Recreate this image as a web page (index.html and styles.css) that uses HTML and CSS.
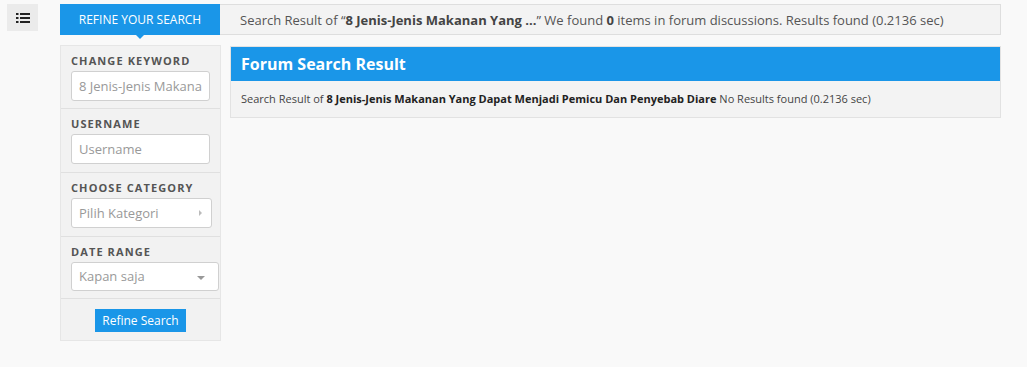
FILE: index.html
```html
<!DOCTYPE html>
<html lang="en">
<head>
    <meta charset="UTF-8">
    <title>Forum Search Result</title>
    <link rel="stylesheet" href="styles.css">
</head>
<body>
    <div class="page">
        <div class="toggle">
            <svg width="14" height="12" viewBox="0 0 14 12">
                <rect x="0" y="1" width="2.5" height="2" fill="#222"/>
                <rect x="4" y="1" width="10" height="2" fill="#222"/>
                <rect x="0" y="5" width="2.5" height="2" fill="#222"/>
                <rect x="4" y="5" width="10" height="2" fill="#222"/>
                <rect x="0" y="9" width="2.5" height="2" fill="#222"/>
                <rect x="4" y="9" width="10" height="2" fill="#222"/>
            </svg>
        </div>

        <div class="content">
            <div class="topbar">
                <div class="tab">Refine your search</div>
                <div class="info">Search Result of “<b>8 Jenis-Jenis Makanan Yang ...</b>” We found <b>0</b> items in forum discussions. Results found (0.2136 sec)</div>
            </div>

            <div class="row">
                <div class="sidebar">
                    <div class="section s1">
                        <label>Change Keyword</label>
                        <div class="field kw">8 Jenis-Jenis Makana</div>
                    </div>
                    <div class="section">
                        <label>Username</label>
                        <div class="field user">Username</div>
                    </div>
                    <div class="section">
                        <label>Choose Category</label>
                        <div class="field cat">Pilih Kategori <span class="arrow-right"></span></div>
                    </div>
                    <div class="section s4">
                        <label>Date Range</label>
                        <div class="field date">Kapan saja <span class="arrow-down"></span></div>
                    </div>
                    <div class="section actions">
                        <button>Refine Search</button>
                    </div>
                </div>

                <div class="result">
                    <div class="result-head">Forum Search Result</div>
                    <div class="result-body">Search Result of <b>8 Jenis-Jenis Makanan Yang Dapat Menjadi Pemicu Dan Penyebab Diare</b> No Results found (0.2136 sec)</div>
                </div>
            </div>
        </div>
    </div>
</body>
</html>
```

FILE: styles.css
```css
body {
    margin: 0;
    background-color: #f9f9f9;
    font-family: 'Open Sans', sans-serif;
    color: #555;
}

.page {
    display: flex;
    align-items: flex-start;
    padding: 4px 0 0 7px;
}

.toggle {
    width: 31px;
    height: 27px;
    background-color: #ebebeb;
    display: flex;
    align-items: center;
    justify-content: center;
}

.content {
    width: 941px;
    margin-left: 22px;
}

.topbar {
    display: flex;
    height: 31px;
    background-color: #f3f3f3;
    border: 1px solid #dedede;
    border-left: none;
    box-sizing: border-box;
}

.tab {
    position: relative;
    width: 160px;
    margin-top: -1px;
    height: 31px;
    background-color: #1a96e8;
    color: #fff;
    font-size: 12px;
    text-transform: uppercase;
    display: flex;
    align-items: center;
    justify-content: center;
}

.tab::after {
    content: "";
    position: absolute;
    left: 76px;
    bottom: -4px;
    border-left: 4px solid transparent;
    border-right: 4px solid transparent;
    border-top: 4px solid #1a96e8;
}

.info {
    padding-left: 20px;
    font-size: 13px;
    display: flex;
    align-items: center;
    white-space: pre;
}

.info b {
    color: #444;
}

.row {
    display: flex;
    align-items: flex-start;
    margin-top: 10px;
}

.sidebar {
    width: 161px;
    background-color: #f2f2f2;
    border: 1px solid #e6e6e6;
    box-sizing: border-box;
}

.section {
    padding: 7px 0 0 10px;
    border-bottom: 1px solid #e0e0e0;
    height: 64px;
    box-sizing: border-box;
}

.s1 { height: 63px; }
.s4 { height: 62px; }

.section label {
    display: block;
    font-size: 11px;
    font-weight: bold;
    letter-spacing: 1.1px;
    text-transform: uppercase;
    color: #555;
    line-height: 15px;
    margin-bottom: 3px;
}

.field {
    position: relative;
    height: 30px;
    background-color: #fff;
    border: 1px solid #d0d0d0;
    border-radius: 3px;
    box-sizing: border-box;
    padding-left: 7px;
    font-size: 13px;
    line-height: 28px;
    color: #999;
}

.kw { width: 139px; }
.user { width: 139px; }
.cat { width: 141px; }
.date { width: 148px; height: 29px; line-height: 27px; }

.arrow-right {
    position: absolute;
    right: 9px;
    top: 11px;
    border-top: 3px solid transparent;
    border-bottom: 3px solid transparent;
    border-left: 3px solid #bbb;
}

.arrow-down {
    position: absolute;
    right: 13px;
    top: 13px;
    border-left: 4px solid transparent;
    border-right: 4px solid transparent;
    border-top: 4px solid #999;
}

.actions {
    border-bottom: none;
    height: 41px;
    padding: 9px 0 0 0;
    text-align: center;
}

button {
    background-color: #1a96e8;
    color: #fff;
    border: none;
    font-family: 'Open Sans', sans-serif;
    font-size: 12px;
    width: 91px;
    height: 23px;
    padding: 0;
    cursor: pointer;
}

.result {
    flex: 1;
    margin-left: 9px;
    margin-top: 1px;
    border: 1px solid #e2e2e2;
    background-color: #f3f3f3;
}

.result-head {
    height: 34px;
    background-color: #1a96e8;
    color: #fff;
    font-size: 16px;
    font-weight: bold;
    line-height: 34px;
    padding-left: 10px;
}

.result-body {
    height: 36px;
    line-height: 36px;
    padding-left: 10px;
    font-size: 11px;
    color: #444;
}

.result-body b {
    color: #222;
}
```
